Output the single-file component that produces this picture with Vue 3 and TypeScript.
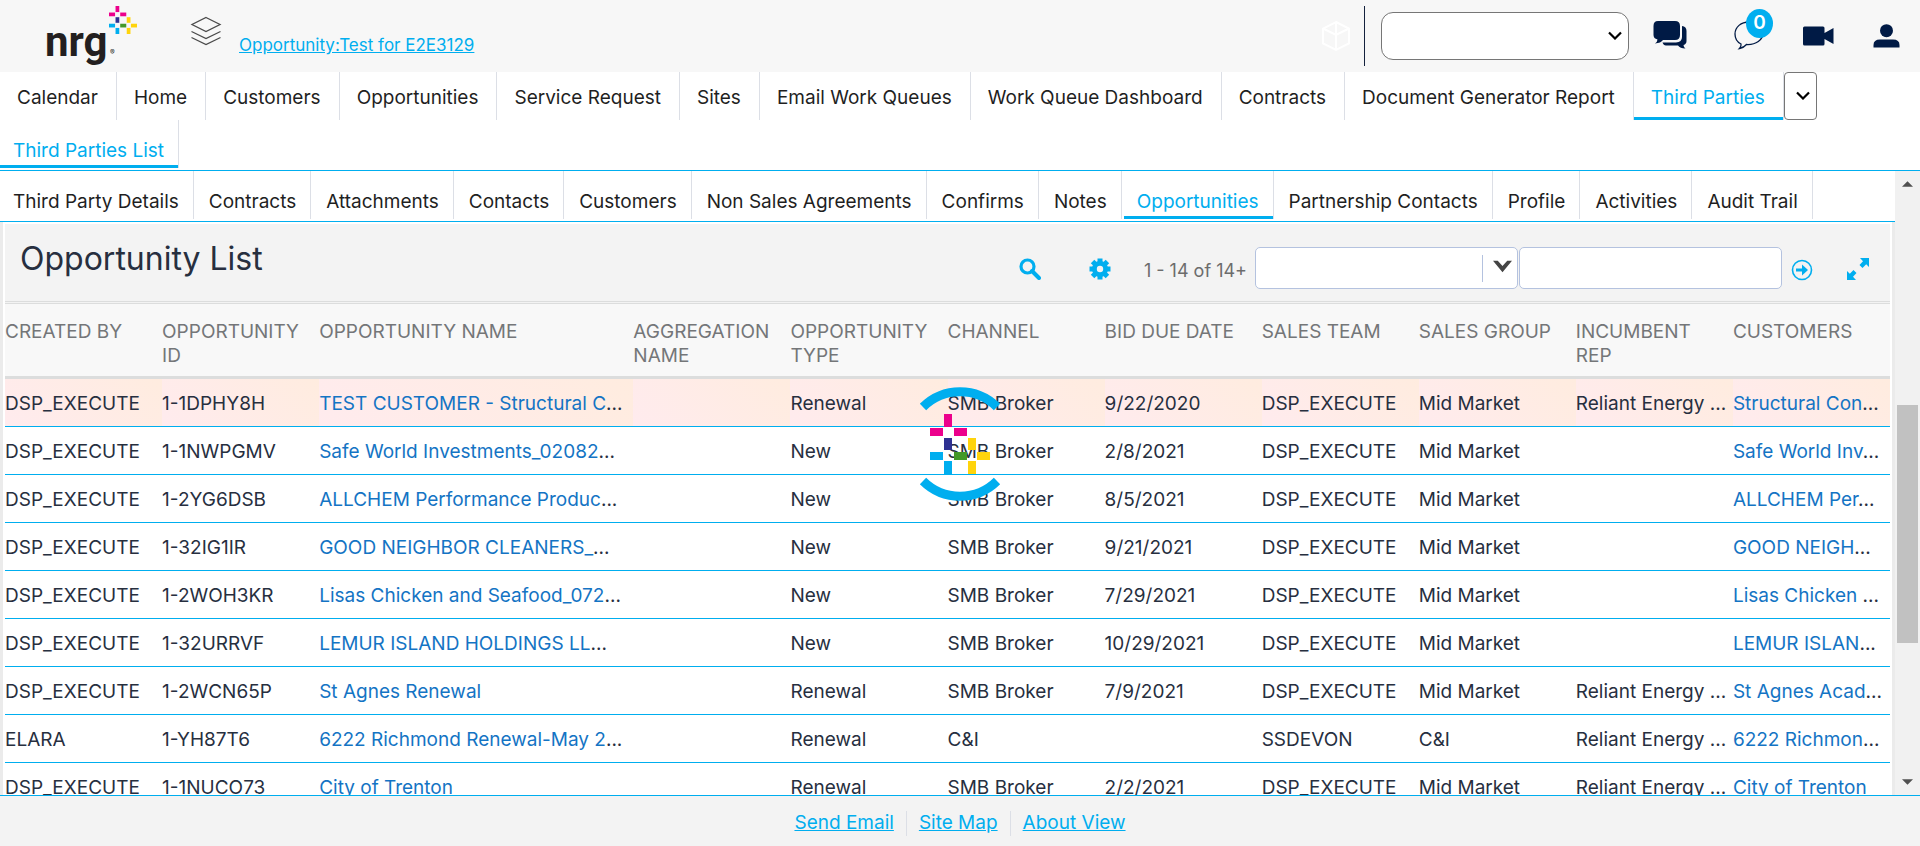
<script setup lang="ts">
import { ref } from 'vue'

interface Row {
  by: string
  id: string
  name: string
  type: string
  channel: string
  due: string
  team: string
  group: string
  rep: string
  customer: string
}

const mainTabs = ['Calendar', 'Home', 'Customers', 'Opportunities', 'Service Request', 'Sites', 'Email Work Queues', 'Work Queue Dashboard', 'Contracts', 'Document Generator Report', 'Third Parties']
const viewTabs = ['Third Party Details', 'Contracts', 'Attachments', 'Contacts', 'Customers', 'Non Sales Agreements', 'Confirms', 'Notes', 'Opportunities', 'Partnership Contacts', 'Profile', 'Activities', 'Audit Trail']
const columns = ['Created By', 'Opportunity ID', 'Opportunity Name', 'Aggregation Name', 'Opportunity Type', 'Channel', 'Bid Due Date', 'Sales Team', 'Sales Group', 'Incumbent Rep', 'Customers']

const activeMain = ref('Third Parties')
const activeView = ref('Opportunities')
const selected = ref(0)
const query = ref('')

const dsp = 'DSP_EXECUTE'
const reliant = 'Reliant Energy ...'
const rows: Row[] = [
  { by: dsp, id: '1-1DPHY8H', name: 'TEST CUSTOMER - Structural C...', type: 'Renewal', channel: 'SMB Broker', due: '9/22/2020', team: dsp, group: 'Mid Market', rep: reliant, customer: 'Structural Con...' },
  { by: dsp, id: '1-1NWPGMV', name: 'Safe World Investments_02082...', type: 'New', channel: 'SMB Broker', due: '2/8/2021', team: dsp, group: 'Mid Market', rep: '', customer: 'Safe World Inv...' },
  { by: dsp, id: '1-2YG6DSB', name: 'ALLCHEM Performance Produc...', type: 'New', channel: 'SMB Broker', due: '8/5/2021', team: dsp, group: 'Mid Market', rep: '', customer: 'ALLCHEM Per...' },
  { by: dsp, id: '1-32IG1IR', name: 'GOOD NEIGHBOR CLEANERS_...', type: 'New', channel: 'SMB Broker', due: '9/21/2021', team: dsp, group: 'Mid Market', rep: '', customer: 'GOOD NEIGH...' },
  { by: dsp, id: '1-2WOH3KR', name: 'Lisas Chicken and Seafood_072...', type: 'New', channel: 'SMB Broker', due: '7/29/2021', team: dsp, group: 'Mid Market', rep: '', customer: 'Lisas Chicken ...' },
  { by: dsp, id: '1-32URRVF', name: 'LEMUR ISLAND HOLDINGS LL...', type: 'New', channel: 'SMB Broker', due: '10/29/2021', team: dsp, group: 'Mid Market', rep: '', customer: 'LEMUR ISLAN...' },
  { by: dsp, id: '1-2WCN65P', name: 'St Agnes Renewal', type: 'Renewal', channel: 'SMB Broker', due: '7/9/2021', team: dsp, group: 'Mid Market', rep: reliant, customer: 'St Agnes Acad...' },
  { by: 'ELARA', id: '1-YH87T6', name: '6222 Richmond Renewal-May 2...', type: 'Renewal', channel: 'C&I', due: '', team: 'SSDEVON', group: 'C&I', rep: reliant, customer: '6222 Richmon...' },
  { by: dsp, id: '1-1NUCO73', name: 'City of Trenton', type: 'Renewal', channel: 'SMB Broker', due: '2/2/2021', team: dsp, group: 'Mid Market', rep: reliant, customer: 'City of Trenton' },
]

// The dots of a shortened value stay outside its link
const stem = (s: string) => s.replace(/\.\.\.$/, '')
const dots = (s: string) => (s.endsWith('...') ? '...' : '')

// x, y, width, height and colour of the brand mark's tiles
const tiles: [number, number, number, number, string][] = [
  [14, 0, 8, 13, '#ec008c'],
  [0, 14, 13, 8, '#ec008c'],
  [24, 14, 13, 8, '#ec008c'],
  [14, 24, 8, 12, '#2e3192'],
  [38, 24, 8, 12, '#ffd40c'],
  [0, 38, 13, 8, '#00aeef'],
  [24, 38, 13, 8, '#439928'],
  [47, 38, 13, 8, '#ffd40c'],
  [14, 47, 8, 13, '#00aeef'],
  [38, 47, 8, 13, '#ffd40c'],
]
</script>

<template>
  <div class="page">
    <header class="top">
      <div class="logo">
        <span class="word">nrg</span>
        <svg class="mark" viewBox="0 0 60 60"><rect v-for="(t, i) in tiles" :key="i" :x="t[0]" :y="t[1]" :width="t[2]" :height="t[3]" :fill="t[4]" /></svg>
        <span class="reg">®</span>
      </div>
      <svg class="layers" viewBox="0 0 32 30" fill="none" stroke="#4a4a4a" stroke-width="1.300"><path d="M16 1.500 30 8.500 16 15.500 2 8.500ZM1.500 15.500 16 22.500 30.500 15.500M1.500 21.500 16 28.500 30.500 21.500" /></svg>
      <a class="thread" href="#">Opportunity:Test for E2E3129</a>
      <div class="tools">
        <svg class="cube" viewBox="0 0 30 32" fill="none" stroke="#fff" stroke-width="2"><path d="M15 2 28 8.500V23.500L15 30 2 23.500V8.500ZM2 8.500 15 15 28 8.500M15 2V30" /></svg>
        <span class="rule"></span>
        <div class="drop picker">
          <select aria-label="Channel status"><option></option></select>
          <svg class="caret" viewBox="0 0 14 9"><path d="M1 1.500 7 7.500 13 1.500" fill="none" stroke="#000" stroke-width="2.200" /></svg>
        </div>
        <button class="ico chat" aria-label="Conversations">
          <svg viewBox="0 0 34 30" fill="#001a45"><path d="M5 1H22Q27 1 27 6V15Q27 20 22 20H10Q8 23 2 23.500Q4.500 21.500 4.500 19.500Q0.500 18.500 0.500 15V6Q0.500 1 5 1Z" /><path d="M29 6Q33.500 6.500 33.500 11V21Q33.500 24 30.500 25Q30.500 27 32.500 28.500Q27 28.500 25 25.500H13Q10.500 25.500 9.500 22.500H23Q29 22 29 17Z" /></svg>
        </button>
        <button class="ico bubble" aria-label="Messages">
          <svg viewBox="0 0 30 30" fill="none" stroke="#001a45" stroke-width="1.300"><path d="M15 2C7 2 1 7 1 14C1 19 3 22 7 24Q7.500 26.500 5.500 28.500Q10 27.500 12.500 24.500C22 25 29 20 29 13C29 6 23 2 15 2Z" /></svg>
          <span class="badge">0</span>
        </button>
        <button class="ico video" aria-label="Video">
          <svg viewBox="0 0 31 20" fill="#001a45"><path d="M1.500 0.500H20Q21.500 0.500 21.500 2V7L30.500 2V18L21.500 13V18Q21.500 19.500 20 19.500H1.500Q0 19.500 0 18V2Q0 0.500 1.500 0.500Z" /></svg>
        </button>
        <button class="ico user" aria-label="Account">
          <svg viewBox="0 0 27 24" fill="#001a45"><circle cx="13.500" cy="6.700" r="6.500" /><path d="M0.500 23.500V21Q0.500 15.500 7 15.500H20Q26.500 15.500 26.500 21V23.500Z" /></svg>
        </button>
      </div>
    </header>

    <nav class="main-tabs">
      <button v-for="t in mainTabs" :key="t" :class="{ on: t === activeMain }" @click="activeMain = t">{{ t }}</button>
      <div class="drop more">
        <select aria-label="More screens"><option></option></select>
        <svg class="caret" viewBox="0 0 14 9"><path d="M1 1.500 7 7.500 13 1.500" fill="none" stroke="#000" stroke-width="2.200" /></svg>
      </div>
    </nav>
    <nav class="sub-tabs"><button class="on">Third Parties List</button></nav>

    <div class="body">
      <main class="content">
        <nav class="view-tabs">
          <button v-for="t in viewTabs" :key="t" :class="{ on: t === activeView }" @click="activeView = t">{{ t }}</button>
        </nav>
        <section class="applet">
          <div class="bar">
            <h1>Opportunity List</h1>
            <div class="actions">
              <button class="ico search" aria-label="Search"><svg viewBox="0 0 22 22" fill="none" stroke="#00aeef"><circle cx="8.500" cy="8.500" r="6.500" stroke-width="3.200" /><path d="M13 13 20 20" stroke-width="4" stroke-linecap="round" /></svg></button>
              <button class="ico gear" aria-label="Settings"><svg viewBox="-11 -11 22 22"><g fill="#00aeef"><rect v-for="a in [0, 45, 90, 135]" :key="a" x="-2.500" y="-10.500" width="5" height="21" :transform="`rotate(${a})`" /><circle r="8" /></g><circle r="3.200" fill="#f3f3f3" /></svg></button>
              <span class="count">1 - 14 of 14+</span>
              <div class="fields">
                <div class="combo">
                  <input aria-label="Search field" />
                  <button aria-label="Open list"><svg viewBox="0 0 20 12"><path d="M0 0H5L10 5.500 15 0H20L10 12Z" fill="#444" /></svg></button>
                </div>
                <input v-model="query" class="value" aria-label="Search value" />
              </div>
              <button class="ico go" aria-label="Go"><svg viewBox="0 0 22 22" fill="none" stroke="#00aeef"><circle cx="11" cy="11" r="9.500" stroke-width="1.600" /><path d="M5 11H14" stroke-width="3" /><path d="M11 5.500 17 11 11 16.500Z" fill="#00aeef" stroke="none" /></svg></button>
              <button class="ico expand" aria-label="Expand"><svg viewBox="0 0 22 22" fill="#00aeef"><path d="M13 0H22V9L19.200 6.200 15.500 10 12.500 7 16 3.200ZM9 22H0V13L2.800 15.800 6.500 12 9.500 15 6 18.800Z" /></svg></button>
            </div>
          </div>
          <table>
            <colgroup><col v-for="c in columns" :key="c" :class="{ wide: c === 'Opportunity Name' }" /></colgroup>
            <thead><tr><th v-for="c in columns" :key="c" scope="col">{{ c }}</th></tr></thead>
            <tbody>
              <tr v-for="(r, i) in rows" :key="r.id" :class="{ picked: i === selected }" @click="selected = i">
                <td>{{ r.by }}</td>
                <td>{{ r.id }}</td>
                <td><a href="#">{{ stem(r.name) }}</a>{{ dots(r.name) }}</td>
                <td></td>
                <td>{{ r.type }}</td>
                <td>{{ r.channel }}</td>
                <td>{{ r.due }}</td>
                <td>{{ r.team }}</td>
                <td>{{ r.group }}</td>
                <td>{{ r.rep }}</td>
                <td><a href="#">{{ stem(r.customer) }}</a>{{ dots(r.customer) }}</td>
              </tr>
            </tbody>
          </table>
        </section>
      </main>
      <div class="scroll">
        <svg viewBox="0 0 12 6"><path d="M0 6 6 0 12 6Z" fill="#505050" /></svg>
        <div class="track"><span class="thumb"></span></div>
        <svg viewBox="0 0 12 6"><path d="M0 0 6 6 12 0Z" fill="#505050" /></svg>
      </div>
    </div>

    <footer class="foot">
      <a href="#">Send Email</a><a href="#">Site Map</a><a href="#">About View</a>
    </footer>

    <div class="busy" role="status" aria-label="Loading">
      <svg viewBox="0 0 120 120">
        <path d="M23 23A52.500 52.500 0 0 1 97 23M23 97A52.500 52.500 0 0 0 97 97" fill="none" stroke="#00aeef" stroke-width="9" />
        <g transform="translate(30 30)"><rect v-for="(t, i) in tiles" :key="i" :x="t[0]" :y="t[1]" :width="t[2]" :height="t[3]" :fill="t[4]" /></g>
      </svg>
    </div>
  </div>
</template>

<style>
html,
body {
  margin: 0;
  overflow: hidden;
}
</style>

<style scoped>
* {
  box-sizing: border-box;
}
.page {
  height: 100vh;
  display: flex;
  flex-direction: column;
  background: #fff;
  color: #1f1f1f;
  font: 19px/24px Inter, 'Noto Sans', sans-serif;
}
button,
select,
input {
  font: inherit;
  color: inherit;
}
button {
  border: 0;
  padding: 0;
  background: none;
  white-space: nowrap;
}
svg {
  display: block;
  width: 100%;
  height: 100%;
}
.top {
  flex: none;
  height: 72px;
  background: #f7f7f7;
  display: flex;
  align-items: flex-start;
}
.logo {
  position: relative;
  width: 143px;
  height: 72px;
  padding-left: 45px;
}
.word {
  font: 700 42px/84px Roboto, sans-serif;
  color: #231f20;
}
.mark {
  position: absolute;
  left: 109px;
  top: 6px;
  width: 28px;
  height: 28px;
}
.reg {
  position: absolute;
  left: 110px;
  top: 49px;
  font-size: 7px;
  line-height: 8px;
}
.layers {
  width: 32px;
  height: 30px;
  margin: 16px 0 0 47px;
}
.thread {
  margin: 33px 0 0 17px;
  color: #00aeef;
  font-size: 17px;
}
.tools {
  margin-left: auto;
  display: flex;
  padding-right: 20px;
}
.ico {
  flex: none;
  position: relative;
}
.cube {
  width: 30px;
  height: 32px;
  margin-top: 20px;
}
.rule {
  width: 1px;
  height: 60px;
  margin: 6px 16px 0 13px;
  background: #14213d;
}
.drop {
  flex: none;
  position: relative;
}
.drop select {
  appearance: none;
  width: 100%;
  height: 100%;
  border: 1px solid #767676;
  border-radius: 4px;
  background: #fff;
}
.caret {
  position: absolute;
  right: 7px;
  top: 19px;
  width: 14px;
  height: 9px;
  pointer-events: none;
}
.picker {
  width: 248px;
  height: 48px;
  margin: 12px 24px 0 0;
}
.picker select {
  border-radius: 12px;
}
.chat {
  width: 34px;
  height: 30px;
  margin: 20px 47px 0 0;
}
.bubble {
  width: 30px;
  height: 30px;
  margin: 20px 39px 0 0;
}
.badge {
  position: absolute;
  left: 12px;
  top: -11px;
  width: 27px;
  height: 29px;
  border-radius: 50%;
  background: #00aeef;
  color: #fff;
  font-weight: 600;
  line-height: 28px;
}
.video {
  width: 31px;
  height: 20px;
  margin: 26px 39px 0 0;
}
.user {
  width: 27px;
  height: 24px;
  margin-top: 24px;
}
.main-tabs,
.sub-tabs,
.view-tabs {
  flex: none;
  display: flex;
}
.main-tabs button {
  height: 48px;
  padding: 4px 18px 0 17px;
  border-right: 1px solid #dcdfe6;
}
.main-tabs button.on,
.sub-tabs button.on,
.view-tabs button.on {
  color: #00aeef;
  box-shadow: inset 0 -3px #00aeef;
}
.more {
  width: 33px;
  height: 48px;
}
.sub-tabs {
  height: 51px;
  border-bottom: 1px solid #00aeef;
}
.sub-tabs button,
.view-tabs button {
  height: 48px;
  padding: 14px 14px 0 13px;
  border-right: 1px solid #dcdfe6;
}
.view-tabs button + button {
  margin-left: 2px;
}
.body {
  flex: 1;
  min-height: 0;
  display: flex;
}
.content {
  flex: 1;
  min-width: 0;
  display: flex;
  flex-direction: column;
}
.view-tabs {
  height: 51px;
  border-bottom: 1px solid #00aeef;
}
.applet {
  flex: 1;
  min-height: 0;
  overflow: hidden;
  margin: 0 3px;
  border: solid #fff;
  border-width: 2px 2px 0;
  box-shadow: 0 0 0 4px #ebebeb;
  clip-path: inset(0 -3px);
}
.bar {
  height: 80px;
  display: flex;
  justify-content: space-between;
  background: #f3f3f3;
  border-bottom: 3px double #dcdddd;
}
h1 {
  margin: 12px 0 0 15px;
  font-size: 32px;
  line-height: 46px;
  font-weight: 400;
  color: #272f3f;
}
.actions {
  display: flex;
  align-items: flex-start;
  padding: 23px 21px 0 0;
}
.search,
.gear,
.expand {
  width: 22px;
  height: 22px;
  margin-top: 11px;
}
.gear {
  margin: 11px 33px 0 48px;
}
.count {
  margin: 12px 8px 0 0;
  font-size: 18px;
  color: #6c6c6c;
}
.fields {
  display: flex;
  gap: 1px;
}
.combo,
.value {
  width: 263px;
  height: 42px;
  border: 1px solid #b4c2df;
  border-radius: 5px;
  background: #fff;
}
.combo {
  display: flex;
  padding: 7px 5px 0 8px;
}
.combo input {
  flex: 1;
  min-width: 0;
  height: 27px;
  border: 0;
  outline: 0;
  background: none;
}
.combo button {
  width: 30px;
  height: 27px;
  padding: 5px 0 9px 10px;
  border-left: 1px solid #b4c2df;
}
.go {
  width: 22px;
  height: 22px;
  margin: 12px 34px 0 9px;
}
table {
  width: 100%;
  table-layout: fixed;
  border-collapse: separate;
  border-spacing: 0;
}
col {
  width: 8.333%;
}
col.wide {
  width: 16.667%;
}
th {
  height: 75px;
  padding: 16px 8px 0 0;
  vertical-align: top;
  text-align: left;
  font-weight: 400;
  text-transform: uppercase;
  color: #747678;
  background: #f8f8f8;
  border-bottom: 3px solid #dcdddd;
}
td {
  height: 48px;
  padding: 3px 0 0;
  white-space: nowrap;
  color: #272f3f;
  border-bottom: 1px solid #00aeef;
}
.picked td {
  background: linear-gradient(45deg, #ffebee, #ffecdf);
}
td a {
  color: #1474c4;
  text-decoration: none;
}
.scroll {
  width: 25px;
  display: flex;
  flex-direction: column;
  align-items: center;
  padding: 10px 0;
  background: #f1f1f1;
}
.scroll svg {
  flex: none;
  width: 11px;
  height: 6px;
}
.track {
  flex: 1;
  padding-top: 218px;
}
.thumb {
  display: block;
  width: 21px;
  height: 238px;
  background: #c1c1c1;
}
.foot {
  flex: none;
  height: 51px;
  display: flex;
  justify-content: center;
  padding-top: 15px;
  background: #f3f3f3;
  border-top: 1px solid #00aeef;
}
.foot a {
  height: 25px;
  padding: 0 12px;
  color: #00aeef;
}
.foot a + a {
  border-left: 1px solid #dcdfe6;
}
.busy {
  position: absolute;
  left: 50%;
  top: 384px;
  width: 120px;
  height: 120px;
  margin-left: -60px;
}
</style>
